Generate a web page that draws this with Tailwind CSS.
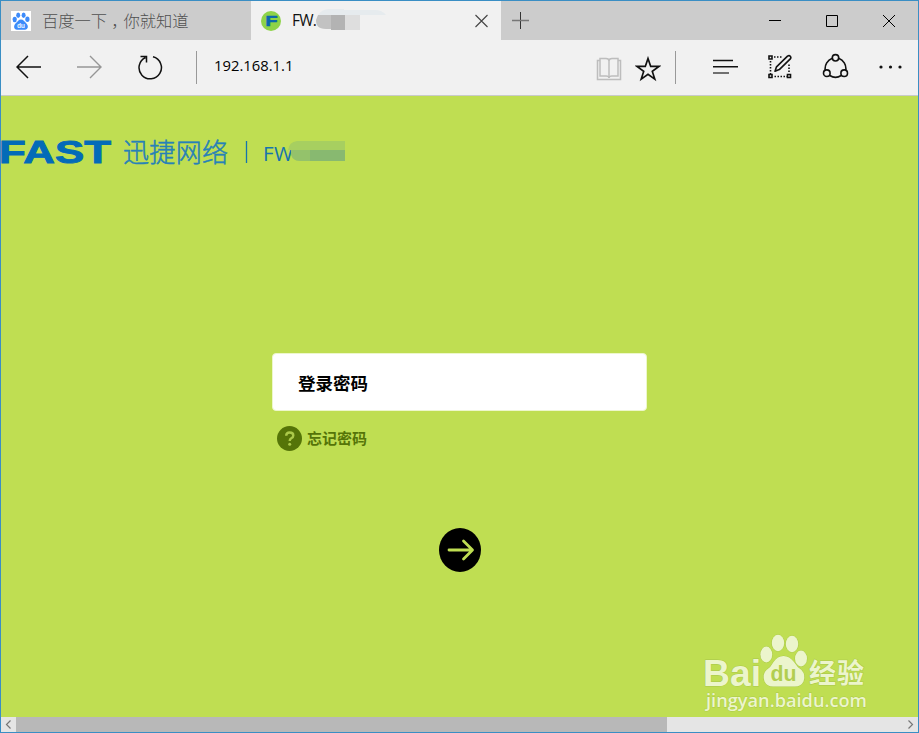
<!DOCTYPE html>
<html lang="zh-CN">
<head>
<meta charset="utf-8">
<title>192.168.1.1</title>
<script src="https://cdn.jsdelivr.net/npm/@tailwindcss/browser@4"></script>
</head>
<body class="w-[919px] h-[733px] overflow-hidden font-['Noto_Sans','Noto_Sans_CJK_SC',sans-serif]">
<div class="w-[919px] h-[733px] border border-[#3a8ec4] bg-[#f1f1f1] flex flex-col overflow-hidden">

  <!-- tab strip -->
  <header class="flex h-[39px] shrink-0 bg-[#cccccc] text-[#111]">
    <div class="w-[250px] flex items-center pl-[10px] text-[#505050]">
      <svg class="w-5 h-5 bg-white" viewBox="0 0 20 20" fill="#3d8bfa">
        <ellipse cx="3.7" cy="8.500" rx="2.1" ry="2.7"/><ellipse cx="7.2" cy="4.2" rx="2" ry="2.7"/><ellipse cx="12.6" cy="4.2" rx="2" ry="2.7"/><ellipse cx="16.4" cy="8.3" rx="2.1" ry="2.7"/>
        <path d="M10 8.500c2.500 0 3.300 2 5 3.500 3.200 3 1.900 6.700-1 6.700H6c-3.200 0-4-3.800-1-6.600C6.700 10.600 7.500 8.500 10 8.500z"/>
        <text x="6" y="17" font-size="6.500" font-weight="700" fill="#e3efff" textLength="8">du</text>
      </svg>
      <span class="ml-[11px] -mt-[2px] w-[150px] text-[16.3px] leading-5 whitespace-nowrap font-['Noto_Sans_CJK_SC',sans-serif] font-light">百度一下<span class="relative left-[4px]">，</span>你就知道</span>
    </div>
    <div class="w-[250px] flex items-center bg-[#f1f1f1] pl-[10px] relative">
      <svg class="w-5 h-5" viewBox="0 0 20 20"><circle cx="10" cy="10" r="10" fill="#8ed348"/><text x="4.500" y="15" font-family="Liberation Sans" font-weight="700" font-size="14" textLength="12" lengthAdjust="spacingAndGlyphs" fill="#0868ad" stroke="#0868ad" stroke-width=".6">F</text></svg>
      <span class="ml-[11px] -mt-px text-[15.5px] tracking-[-0.8px] leading-5 font-['Open_Sans',sans-serif]">FW.</span>
      <svg class="absolute left-[62px] top-[7px] w-[76px] h-[23px]" viewBox="0 0 76 23">
        <path d="M5 7Q9 1 16 1h15v1h31q7 0 11 5z" fill="#e6ebee"/>
        <path d="M5 7h13v14h-5C5 21 3 17 3 12z" fill="#c2c2c2"/><path d="M18 7h14v15H18z" fill="#b3b3b3"/><path d="M32 7h15v15H32z" fill="#dedede"/>
      </svg>
      <svg class="ml-auto mr-[12px] w-[14px] h-[14px]" viewBox="0 0 14 14" stroke="#444" stroke-width="1.1"><path d="M.5 1l12 12M12.500 1L.5 13"/></svg>
    </div>
    <div class="flex items-center flex-1 pl-[11px]">
      <svg class="w-[17px] h-[17px]" viewBox="0 0 17 17"><path d="M8.500 0v17" stroke="#333"/><path d="M0 8.500h17" stroke="#777" stroke-width="1.500"/></svg>
      <svg class="ml-auto w-[12px] h-[12px]" viewBox="0 0 12 12"><path d="M0 5.500h12" stroke="#000"/></svg>
      <svg class="ml-[45px] w-[12px] h-[12px]" viewBox="0 0 12 12"><path d="M.5.5h11v11H.5z" fill="none" stroke="#000"/></svg>
      <svg class="ml-[45px] mr-[23px] w-[12px] h-[12px]" viewBox="0 0 12 12"><path d="M0 0l12 12M12 0L0 12" stroke="#000"/></svg>
    </div>
  </header>

  <!-- toolbar -->
  <nav class="flex h-[56px] shrink-0 items-center border-b border-[#c9cbc9] pb-[2px]">
    <svg class="ml-[15px] w-[25px] h-[24px]" viewBox="0 0 25 24" fill="none" stroke="#111" stroke-width="1.500"><path d="M1 12h24M12 1L1 12l11 11"/></svg>
    <svg class="ml-[36px] w-[25px] h-[24px]" viewBox="0 0 25 24" fill="none" stroke="#969696" stroke-width="1.400"><path d="M0 12h24M13 1l11 11-11 11"/></svg>
    <svg class="ml-[35px] w-[26px] h-[26px]" viewBox="0 0 26 26" fill="none" stroke="#111" stroke-width="1.500"><path d="M16 2.800A11.200 11.200 0 1 1 8.500 3.500M3.500 2.500h6v6"/></svg>
    <i class="ml-[33px] mt-px w-px h-[33px] bg-[#999]"></i>
    <span class="ml-[17px] -mt-[3px] text-[14.800px] leading-5 text-black font-['Open_Sans',sans-serif]">192.168.1.1</span>
    <div class="ml-auto flex items-center">
      <svg class="w-[26px] h-[24px] mt-[5px]" viewBox="0 0 26 24" fill="none" stroke="#bdbdbd" stroke-width="1.500"><path d="M4 3.500H1.500v19h23v-19H22M13 4v17" /><path d="M4 1.500h6q3 0 3 2.500 0-2.500 3-2.500h6v17.500h-6q-3 0-3 2 0-2-3-2H4z"/></svg>
      <svg class="ml-[13px] mt-[4px] w-[26px] h-[26px]" viewBox="0 0 26 26" fill="none" stroke="#111" stroke-width="1.700"><path d="M13 2.500l2.700 7.900h8.200l-6.600 5 2.500 7.700L13 18.400l-6.800 4.700 2.500-7.700-6.600-5h8.200z"/></svg>
      <i class="ml-[14px] mt-px w-px h-[33px] bg-[#999]"></i>
      <svg class="ml-[37px] w-[25px] h-[16px]" viewBox="0 0 25 16" stroke="#111" stroke-width="1.500"><path d="M0 1.500h20M0 7.800h25"/><path d="M0 14h16" stroke="#444"/></svg>
      <svg class="ml-[29px] w-[26px] h-[26px]" viewBox="0 0 26 26" fill="none" stroke="#111" stroke-width="1.600"><path d="M2 2h3v3H2zM2 20.500h3v3H2zM20.500 20.500h3v3h-3z"/><path d="M7 3h9M3.500 7v13M22 10.500v9M7.500 22.500h13" stroke-dasharray="1.500 1.500"/><path d="M8 17.200l1.500-4.400L20.500 2.200q1.600-1.200 2.800 0 1.100 1.300 0 2.700L12.300 15.600z" stroke-linejoin="round"/></svg>
      <svg class="ml-[29px] w-[27px] h-[27px]" viewBox="0 0 27 27" fill="none" stroke="#111" stroke-width="1.600"><circle cx="13.500" cy="4.800" r="3.200"/><circle cx="4.800" cy="20.200" r="3.300"/><circle cx="22.200" cy="20.200" r="3.300"/><path d="M10.300 5.300A11 11 0 0 0 3.200 17M16.700 5.300A11 11 0 0 1 23.800 17M7.800 22.500a10.500 10.500 0 0 0 11.400 0"/></svg>
      <svg class="ml-[30px] mr-[15px] w-[24px] h-[4px]" viewBox="0 0 24 4" fill="#111"><circle cx="2" cy="2" r="1.600"/><circle cx="11.500" cy="2" r="1.600"/><circle cx="21" cy="2" r="1.600"/></svg>
    </div>
  </nav>

  <!-- router login page -->
  <main class="h-[621px] shrink-0 bg-[#bfde52] flex flex-col relative">
    <div class="mt-[32px] flex h-[48px] items-center">
      <svg class="w-[360px] h-[48px]" viewBox="1 -8 360 48">
        <text x="-1" y="27" font-family="Liberation Sans" font-weight="700" font-size="31.500" textLength="112" lengthAdjust="spacingAndGlyphs" fill="#036bb8" stroke="#036bb8" stroke-width=".9">FAST</text>
        <text x="123" y="25.500" font-family="Noto Sans CJK SC" font-weight="300" font-size="26" textLength="105" fill="#2681b8" stroke="#2681b8" stroke-width=".5">迅捷网络</text>
        <path d="M246.500 5v22" stroke="#1674ad" stroke-width="1.300"/>
        <text x="263" y="24.500" font-family="Open Sans" font-size="20.500" textLength="30" fill="#1674ad">FW</text>
        <path d="M288 14q1-8 9-9h48v9z" fill="#a7cf60"/><path d="M291 14h54v11h-45q-7 0-9-6z" fill="#94c26b"/><path d="M310 14h20v11h-20zM330 14h15v11h-15z" fill="#88b970"/>
      </svg>
    </div>
    <form class="mt-[177px] ml-[271px] w-[375px] flex flex-col">
      <label class="h-[58px] bg-white rounded-[4px] border border-[#edf7cb] flex items-center pl-[25px] pt-px text-[17.500px] leading-6 font-bold text-black font-['Noto_Sans_CJK_SC',sans-serif]">登录密码</label>
      <div class="mt-[15px] pl-[5px] flex items-center h-[25px] text-[#557408]">
        <svg class="w-[25px] h-[25px]" viewBox="0 0 25 25"><circle cx="12.500" cy="12.500" r="12.500" fill="#557408"/><path d="M9.200 9.800q0-3.300 3.500-3.300 3.600 0 3.600 3 0 1.800-2 2.800-1.600.9-1.600 2.800" fill="none" stroke="#abc94a" stroke-width="2.400"/><circle cx="12.700" cy="18.200" r="1.500" fill="#abc94a"/></svg>
        <span class="ml-[5px] -mt-[2px] text-[15px] leading-5 font-bold font-['Noto_Sans_CJK_SC',sans-serif]">忘记密码</span>
      </div>
      <svg class="mt-[77px] ml-[167px] w-[42px] h-[44px]" viewBox="0 0 42 44"><ellipse cx="21" cy="22" rx="21" ry="22" fill="#000"/><path d="M10 22h23M24.500 13l9 9-9 9" fill="none" stroke="#bfde52" stroke-width="2.800" stroke-linecap="round" stroke-linejoin="round"/></svg>
    </form>
    <svg class="absolute left-[699px] top-[534px] w-[180px] h-[85px]" viewBox="700 630 180 85" fill="#ecf5cc" stroke="#aac84b" stroke-width="1" paint-order="stroke">
      <text x="703" y="685.500" font-family="Liberation Sans" font-weight="700" font-size="37" textLength="58" lengthAdjust="spacingAndGlyphs">Bai</text>
      <ellipse cx="766.300" cy="654.500" rx="5.900" ry="7.900"/><ellipse cx="778" cy="643" rx="6.200" ry="8.200"/><ellipse cx="792" cy="644" rx="6.200" ry="8.200"/><ellipse cx="801" cy="658.500" rx="6" ry="7.900"/>
      <path d="M783.500 656q6 0 10.500 6 3 5 7.500 8 4.500 5 2 11.500-2.500 5-8.500 5h-22q-6 0-8.500-5-2.500-7.500 2-11.500 4.500-3 7-8 4-6 10-6z"/>
      <text x="770.500" y="681" font-family="Liberation Sans" font-weight="700" font-size="22" textLength="26" lengthAdjust="spacingAndGlyphs" fill="#b2ce50" stroke="none">du</text>
      <text x="809" y="682.500" font-family="Noto Sans CJK SC" font-weight="700" font-size="27" textLength="55">经验</text>
      <text x="706" y="706.500" font-family="Open Sans" font-size="18" textLength="161" lengthAdjust="spacingAndGlyphs" font-weight="600" stroke-width=".8">jingyan.baidu.com</text>
    </svg>
  </main>

  <!-- horizontal scrollbar -->
  <footer class="h-[15px] shrink-0 flex bg-[#e5e5e5]">
    <svg class="w-[15px] h-[15px]" viewBox="0 0 15 15"><path d="M9.500 3.500L5.500 7.500l4 4" fill="none" stroke="#777" stroke-width="1.200"/></svg>
    <i class="w-[651px] bg-[#b8b8b8]"></i>
    <svg class="ml-auto w-[15px] h-[15px]" viewBox="0 0 15 15"><path d="M5.500 3.500l4 4-4 4" fill="none" stroke="#777" stroke-width="1.200"/></svg>
  </footer>
</div>
</body>
</html>
